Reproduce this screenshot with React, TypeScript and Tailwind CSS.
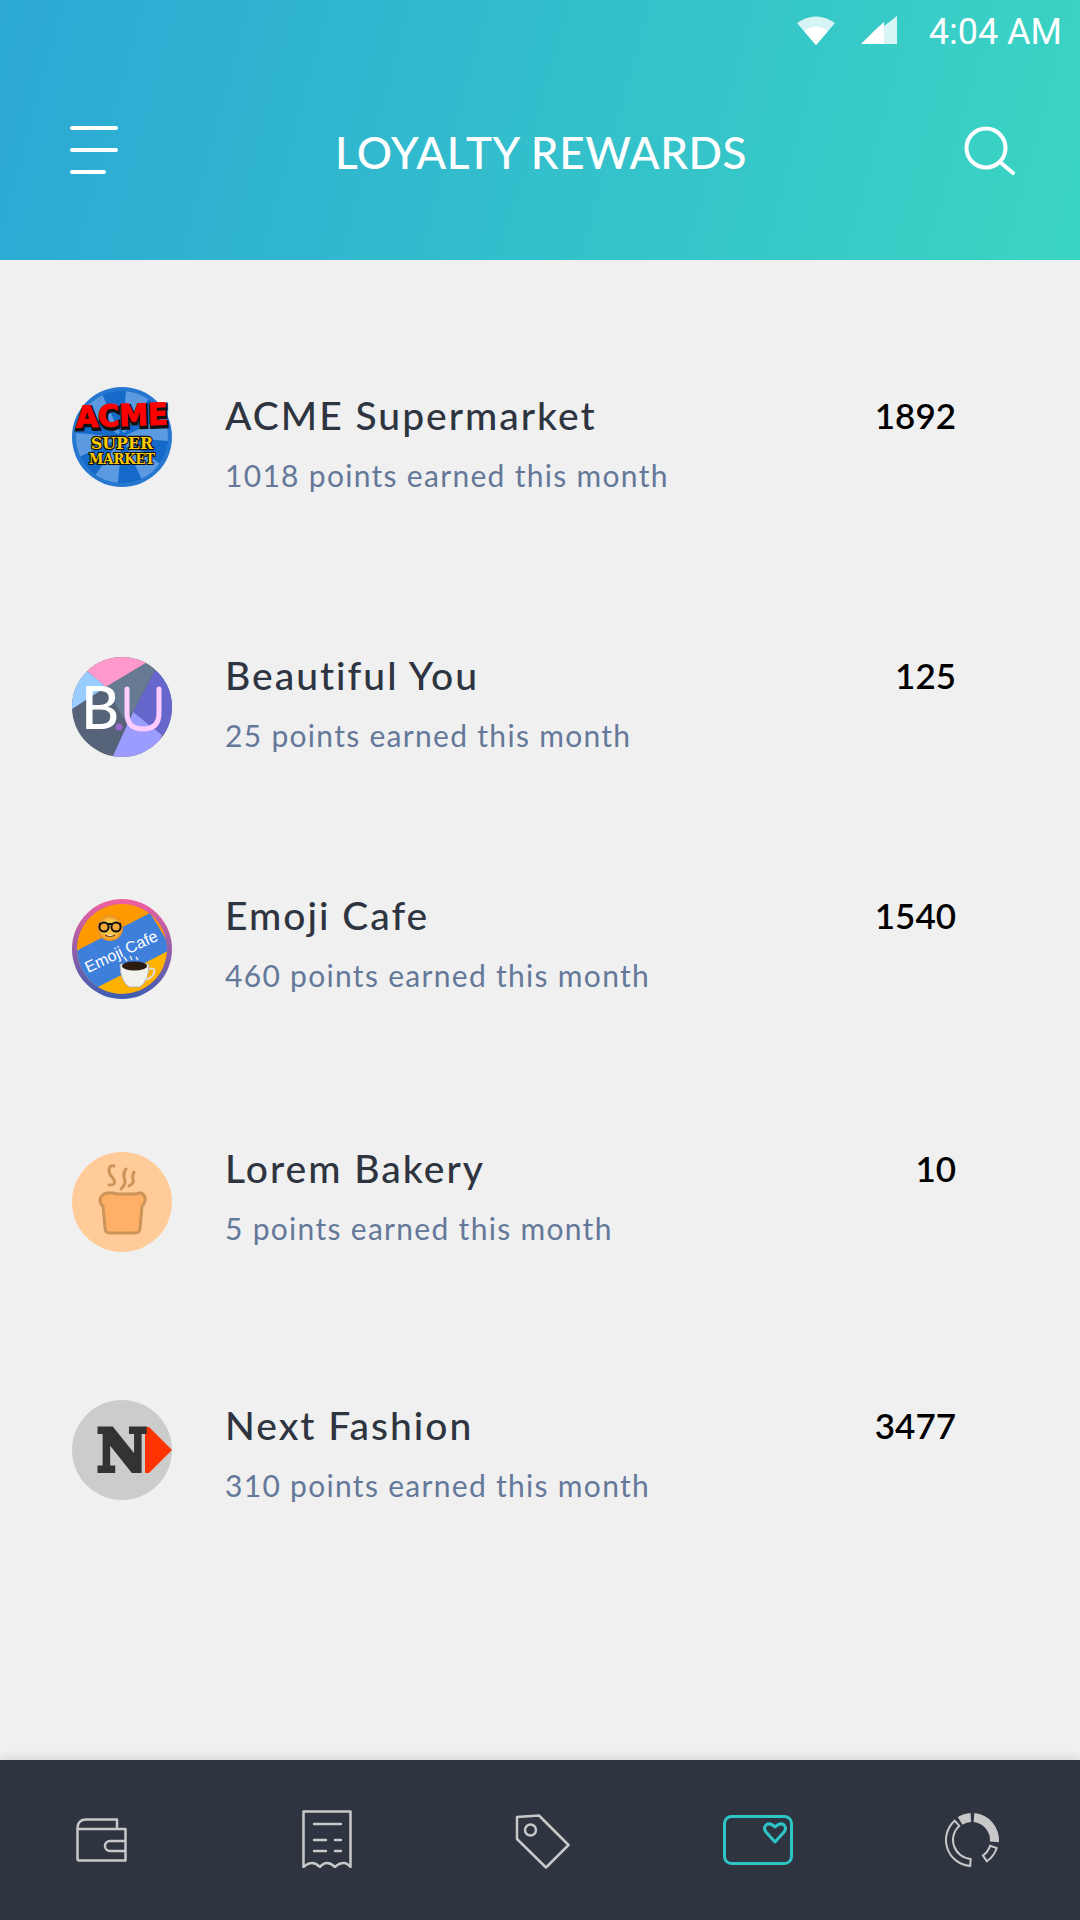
import { ReactNode } from 'react'

type Reward = {
    name: string
    note: string
    total: string
    logo: ReactNode
    rowClass: string
    logoClass: string
    textClass: string
}

// (cx, cy) 中心の扇形リング
function sector(c: number, r1: number, r2: number, from: number, to: number) {
    const pt = (r: number, a: number) => {
        const t = ((a - 90) * Math.PI) / 180
        return `${(c + r * Math.cos(t)).toFixed(2)} ${(c + r * Math.sin(t)).toFixed(2)}`
    }
    const large = to - from > 180 ? 1 : 0
    return `M${pt(r2, from)} A${r2} ${r2} 0 ${large} 1 ${pt(r2, to)} L${pt(r1, to)} A${r1} ${r1} 0 ${large} 0 ${pt(r1, from)} Z`
}

function AcmeLogo() {
    const wedges = [0, 60, 120, 180, 240, 300]
    return (
        <svg width="100" height="100" viewBox="0 0 100 100" className="overflow-visible">
            <circle cx="50" cy="50" r="50" fill="#2677cf" />
            <circle cx="50" cy="50" r="46" fill="#1569c9" />
            {wedges.map(a => (
                <path key={a} d={sector(50, 5, 46, a + 5, a + 35)} fill="#5b9ae0" />
            ))}
            <text
                x="51"
                y="41"
                textAnchor="middle"
                fontFamily="'DejaVu Sans', sans-serif"
                fontWeight="700"
                fontSize="30"
                fill="#111"
                stroke="#111"
                strokeWidth="4"
                textLength="92"
                lengthAdjust="spacingAndGlyphs"
                transform="rotate(-2 50 40)">
                ACME
            </text>
            <text
                x="50"
                y="39"
                textAnchor="middle"
                fontFamily="'DejaVu Sans', sans-serif"
                fontWeight="700"
                fontSize="30"
                fill="#ff0000"
                stroke="#ff0000"
                strokeWidth="1"
                textLength="92"
                lengthAdjust="spacingAndGlyphs"
                transform="rotate(-2 50 40)">
                ACME
            </text>
            <text
                x="50"
                y="62"
                textAnchor="middle"
                fontFamily="'DejaVu Serif', serif"
                fontWeight="700"
                fontSize="17"
                fill="#ffcc00"
                stroke="#111"
                strokeWidth="2.4"
                paintOrder="stroke"
                textLength="62"
                lengthAdjust="spacingAndGlyphs">
                SUPER
            </text>
            <text
                x="50"
                y="77"
                textAnchor="middle"
                fontFamily="'DejaVu Serif', serif"
                fontWeight="700"
                fontSize="14"
                fill="#ffcc00"
                stroke="#111"
                strokeWidth="2.2"
                paintOrder="stroke"
                textLength="66"
                lengthAdjust="spacingAndGlyphs">
                MARKET
            </text>
        </svg>
    )
}

function BeautyLogo() {
    return (
        <svg width="100" height="100" viewBox="0 0 100 100">
            <clipPath id="bu-clip">
                <circle cx="50" cy="50" r="50" />
            </clipPath>
            <g clipPath="url(#bu-clip)">
                <rect width="100" height="100" fill="#566378" />
                <polygon points="15,14 30,-5 70,-5 74,6 34,30" fill="#ff99cc" />
                <polygon points="15,14 34,30 0,52 -5,30" fill="#99ccff" />
                <polygon points="34,30 74,6 83,13 61,55 52,62" fill="#667b92" />
                <polygon points="83,13 105,30 105,70 90,78 61,55" fill="#6766cc" />
                <polygon points="61,55 90,78 80,105 41,105 41,99" fill="#9c9cff" />
            </g>
            <text x="9" y="72" fontFamily="'Lato', sans-serif" fontSize="59" fontWeight="500" fill="#ffffff">
                B
            </text>
            <circle cx="47" cy="70" r="3.5" fill="#9966cc" />
            <path d="M55 32 V56 Q55 72 71 72 Q87 72 87 56 V32" fill="none" stroke="#ffccff" strokeWidth="5" strokeLinecap="round" />
        </svg>
    )
}

function EmojiLogo() {
    return (
        <svg width="100" height="100" viewBox="0 0 100 100">
            <defs>
                <linearGradient id="emoji-ring" x1="0" y1="0" x2="0" y2="1">
                    <stop offset="0" stopColor="#f2609f" />
                    <stop offset="1" stopColor="#3a5cb2" />
                </linearGradient>
                <clipPath id="emoji-clip">
                    <circle cx="50" cy="50" r="45" />
                </clipPath>
                <radialGradient id="emoji-face">
                    <stop offset="0.6" stopColor="#fbc64c" />
                    <stop offset="1" stopColor="#e88a1a" />
                </radialGradient>
            </defs>
            <circle cx="50" cy="50" r="50" fill="url(#emoji-ring)" />
            <g clipPath="url(#emoji-clip)">
                <rect width="100" height="55" fill="#ff9900" />
                <rect y="50" width="100" height="50" fill="#ffb300" />
                <polygon points="0,54 78,14 100,50 26,88 0,90" fill="#3f7fdc" />
            </g>
            {/* メガネの顔 */}
            <circle cx="38" cy="29" r="13" fill="url(#emoji-face)" />
            <path d="M27 25 H49" stroke="#111" strokeWidth="2" />
            <circle cx="32" cy="28" r="4.6" fill="#f3a93a" stroke="#111" strokeWidth="2" />
            <circle cx="44" cy="28" r="4.6" fill="#f3a93a" stroke="#111" strokeWidth="2" />
            <path d="M33 36 Q38 39 43 36" fill="#fff" stroke="#7a3d0c" strokeWidth="1.2" />
            <text
                x="49"
                y="58"
                textAnchor="middle"
                fontFamily="'Liberation Sans', sans-serif"
                fontSize="16"
                fill="#ffffff"
                transform="rotate(-25 49 52)">
                Emoji Cafe
            </text>
            {/* コーヒーカップ */}
            <path d="M48 65 H77 Q77 82 68 88 H57 Q48 82 48 65 Z" fill="#f1f1ee" stroke="#aaa" strokeWidth="0.8" />
            <ellipse cx="62.5" cy="67" rx="12.5" ry="4.5" fill="#2d1c10" />
            <path d="M77 70 Q84 68 82 74 Q80 80 72 81" fill="none" stroke="#ddd" strokeWidth="2" />
            <path d="M52 58 L55 62 M58 57 L60 61 M64 58 L66 61" stroke="#e8e8e8" strokeWidth="1.5" />
        </svg>
    )
}

function BakeryLogo() {
    return (
        <svg width="100" height="100" viewBox="0 0 100 100">
            <circle cx="50" cy="50" r="50" fill="#ffcc99" />
            <path
                d="M35 41 H41 Q44 42 47 42 H62 Q64 42 67 41 H69 Q74 43 73 49 Q72 52 70 54 L68 76 Q68 81 63 81 H38 Q33 81 33 76 L31 54 Q28 52 28 48 Q29 42 35 41 Z"
                fill="#ffb066"
                stroke="#cc9459"
                strokeWidth="3"
            />
            <path
                d="M42 14 Q37 13 37 18 Q37 22 40 25 Q44 30 42 32 Q40 33 37 33 M54 17 Q51 21 52 25 Q53 28 53 31 Q52 34 49 37 M62 20 Q60 24 61 27 Q62 30 60 32 Q58 33 57 34"
                fill="none"
                stroke="#cc9459"
                strokeWidth="3"
                strokeLinecap="round"
            />
        </svg>
    )
}

function NextLogo() {
    return (
        <svg width="100" height="100" viewBox="0 0 100 100" className="overflow-visible">
            <circle cx="50" cy="50" r="50" fill="#cccccc" />
            <polygon points="77,27 100,50 77,73 73,73 73,27" fill="#ff3300" />
            <text
                x="25"
                y="71"
                fontFamily="'DejaVu Serif', serif"
                fontWeight="700"
                fontSize="58"
                fill="#333333"
                stroke="#333333"
                strokeWidth="4"
                textLength="50"
                lengthAdjust="spacingAndGlyphs">
                N
            </text>
        </svg>
    )
}

const rewards: Reward[] = [
    {
        name: 'ACME Supermarket',
        note: '1018 points earned this month',
        total: '1892',
        logo: <AcmeLogo />,
        rowClass: 'mt-[127px]',
        logoClass: 'mt-0',
        textClass: 'mt-[6px]',
    },
    {
        name: 'Beautiful You',
        note: '25 points earned this month',
        total: '125',
        logo: <BeautyLogo />,
        rowClass: 'mt-[160px]',
        logoClass: 'mt-[4px]',
        textClass: 'mt-0',
    },
    {
        name: 'Emoji Cafe',
        note: '460 points earned this month',
        total: '1540',
        logo: <EmojiLogo />,
        rowClass: 'mt-[136px]',
        logoClass: 'mt-[6px]',
        textClass: 'mt-0',
    },
    {
        name: 'Lorem Bakery',
        note: '5 points earned this month',
        total: '10',
        logo: <BakeryLogo />,
        rowClass: 'mt-[147px]',
        logoClass: 'mt-[6px]',
        textClass: 'mt-0',
    },
    {
        name: 'Next Fashion',
        note: '310 points earned this month',
        total: '3477',
        logo: <NextLogo />,
        rowClass: 'mt-[148px]',
        logoClass: 'mt-0',
        textClass: 'mt-[3px]',
    },
]

function StatusBar() {
    return (
        <div className="flex h-[64px] items-start justify-end pr-[18px] text-white">
            <svg width="38" height="30" viewBox="0 0 38 30" className="mt-[15px]">
                <path d="M0 8 Q19 -5 38 8 L19 30 Z" fill="#ffffff" fillOpacity="0.8" />
                <path d="M7 16 Q19 7 31 16 L19 30 Z" fill="#ffffff" />
            </svg>
            <svg width="36" height="28" viewBox="0 0 36 28" className="ml-[26px] mt-[16px]">
                <path d="M36 0 V28 H0 Z" fill="#ffffff" fillOpacity="0.8" />
                <path d="M23 11 V28 H0 L12 16 Z M12 16 L23 6 V28 Z" fill="#ffffff" />
            </svg>
            <span className="ml-[32px] mt-[12px] font-['Roboto',sans-serif] text-[36px] leading-[40px]">4:04 AM</span>
        </div>
    )
}

function Header() {
    return (
        <header className="h-[260px] bg-linear-[105deg,#2ba8d5,#3bd5c3]">
            <StatusBar />
            <div className="flex h-[172px] items-center justify-between pl-[70px] pr-[65px]">
                <svg width="48" height="50" viewBox="0 0 48 50">
                    <rect x="0" y="1" width="48" height="4" rx="2" fill="#fff" />
                    <rect x="0" y="23" width="48" height="4" rx="2" fill="#fff" />
                    <rect x="0" y="45" width="36" height="4" rx="2" fill="#fff" />
                </svg>
                <h1 className="mt-[4px] font-['Lato',sans-serif] text-[44px] font-medium leading-[50px] tracking-[0.6px] text-white">
                    LOYALTY REWARDS
                </h1>
                <svg width="51" height="49" viewBox="0 0 51 49" fill="none" stroke="#fff" strokeWidth="4" strokeLinecap="round">
                    <circle cx="22" cy="22" r="19.5" />
                    <path d="M36 36 L49 47" />
                </svg>
            </div>
        </header>
    )
}

function RewardRow({ item }: { item: Reward }) {
    return (
        <li className={`flex items-start pl-[72px] pr-[124px] ${item.rowClass}`}>
            <div className={`h-[100px] w-[100px] shrink-0 ${item.logoClass}`}>{item.logo}</div>
            <div className={`ml-[53px] flex-1 ${item.textClass}`}>
                <div className="flex items-center justify-between">
                    <span className="text-[39px] font-medium leading-[44px] tracking-[2px] text-[#2e3440]">{item.name}</span>
                    <span className="text-[35px] font-semibold leading-[44px] text-black">{item.total}</span>
                </div>
                <p className="mt-[20px] text-[30px] leading-[36px] tracking-[1.3px] text-[#64789a]">{item.note}</p>
            </div>
        </li>
    )
}

function BottomNav() {
    return (
        <nav className="flex h-[160px] shrink-0 items-start bg-[#2e3440] shadow-[0_-4px_8px_rgba(0,0,0,0.08)]">
            <svg width="51" height="44" viewBox="0 0 51 44" fill="none" stroke="#c8c8c8" strokeWidth="2.5" strokeLinejoin="round" className="ml-[76px] mt-[58px]">
                <path d="M1.5 42.5 V10 Q2 1.5 10 1.5 H41 V11" />
                <path d="M1.5 11 H49.5 V42.5 H1.5" />
                <path d="M49.5 23 H34 A5 5 0 0 0 34 33 H49.5" />
            </svg>
            <svg width="50" height="58" viewBox="0 0 50 58" fill="none" stroke="#c8c8c8" strokeWidth="2.5" strokeLinejoin="round" strokeLinecap="round" className="ml-[175px] mt-[50px]">
                <path d="M1.5 57 V1.5 H48.5 V57 Q45 53 42 53 Q37 53 33 57 Q29 53 25 53 Q21 53 18 57 Q14 53 10 53 Q6 53 1.5 57 Z" />
                <path d="M12 14 H39 M12 30 H24 M33 30 H39 M12 41 H24 M33 41 H39" />
            </svg>
            <svg width="55" height="55" viewBox="0 0 55 55" fill="none" stroke="#c8c8c8" strokeWidth="2.5" strokeLinejoin="round" className="ml-[163px] mt-[54px]">
                <path d="M2 3 L24 1.5 L53.5 31 L31 53.5 L2 25 Z" />
                <circle cx="15.5" cy="16" r="5.5" />
            </svg>
            <svg width="70" height="50" viewBox="0 0 70 50" fill="none" stroke="#2ec4c8" strokeWidth="3" strokeLinejoin="round" className="ml-[153px] mt-[55px]">
                <rect x="1.5" y="1.5" width="67" height="47" rx="7" />
                <path d="M52 27 L43 17 Q40 13 43 10 Q47 7 52 12 Q57 7 61 10 Q64 13 61 17 Z" />
            </svg>
            <svg width="54" height="54" viewBox="0 0 54 54" className="ml-[152px] mt-[53px]">
                <path d={sector(27, 18, 27, 5, 95)} fill="#c8c8c8" />
                <path d={sector(27, 18, 27, -32, -3)} fill="#c8c8c8" />
                <path d={sector(27, 19, 26, 108, 145)} fill="none" stroke="#c8c8c8" strokeWidth="2" />
                <path d={sector(27, 19, 26, 184, 318)} fill="none" stroke="#c8c8c8" strokeWidth="2" />
            </svg>
        </nav>
    )
}

export default function App() {
    return (
        <div className="flex h-[1920px] w-[1080px] flex-col overflow-hidden bg-[#f0f0f0] font-['Lato',sans-serif]">
            <Header />
            <ul className="flex-1">
                {rewards.map(item => (
                    <RewardRow key={item.name} item={item} />
                ))}
            </ul>
            <BottomNav />
        </div>
    )
}
